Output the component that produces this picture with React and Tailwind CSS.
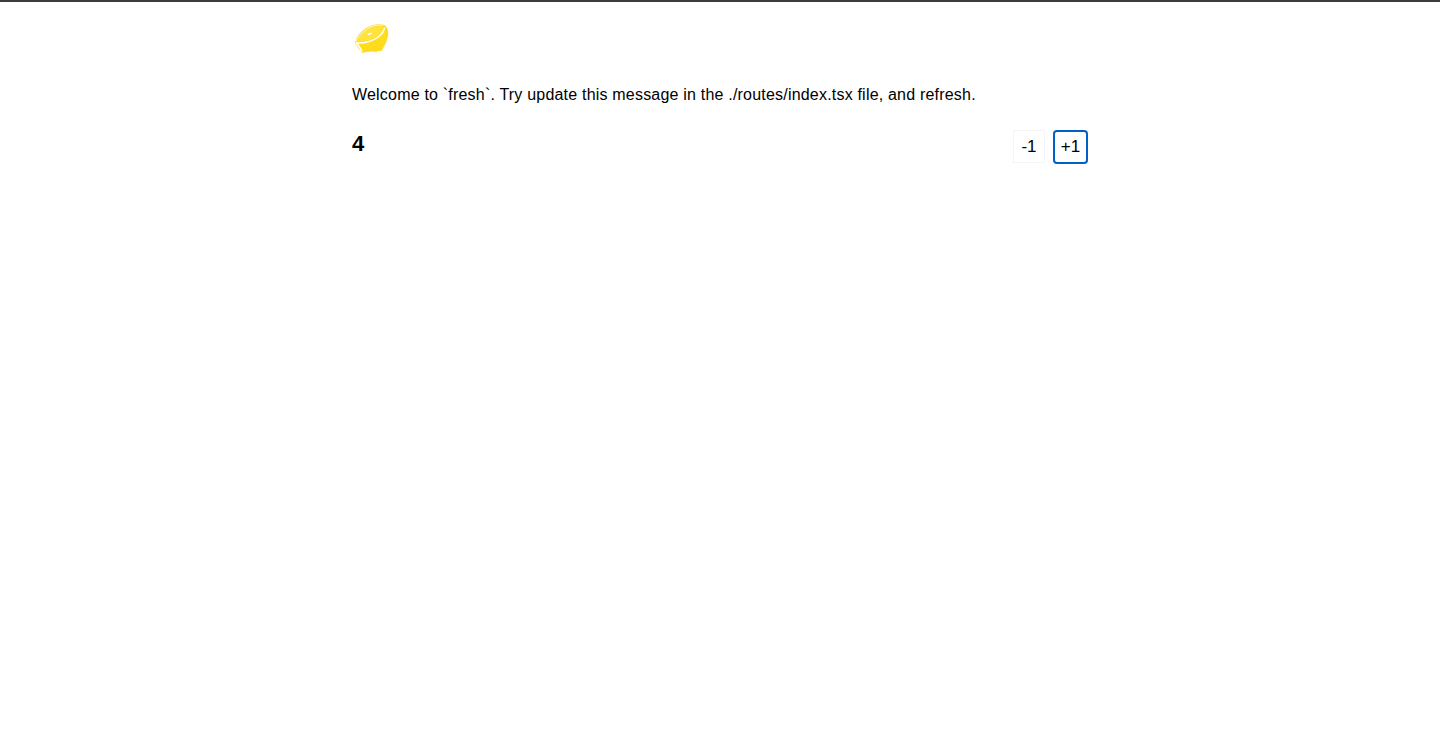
export default function App() {
  return (
    <div className="min-h-[730px] bg-white text-black font-['Liberation_Sans',Arial,sans-serif]">
      <div className="h-0.5 bg-[#3c3c3c]" />
      <div className="mx-auto w-[736px] pt-[21px]">
        <svg width="40" height="34" viewBox="0 0 40 34" className="block">
          <path d="M3 20C4 13 11 6 18 3C23 1 29 1 32 2C35 3 37 8 36 13C35 19 32 24 29.5 28L26 28L24 29L20 28.5L14 29L10 30C8 27 5 24 3 20Z" fill="#FFDB1E" />
          <path d="M5 18.5C7 13 12 8 18 5C23 3 28 2.5 30.5 3.2C32 6 30 10 26 13C20 17 12 19 5 18.5Z" fill="#FFE23C" />
          <path d="M4.5 20C13 20.5 22 17.5 27 13.5C30 11 32 8 32.6 4.5" fill="none" stroke="#ffffff" strokeWidth="1.5" />
          <path d="M4.5 20C6 22.5 8.5 24.5 9.5 28" fill="none" stroke="#ffffff" strokeWidth="1.8" strokeLinecap="round" />
          <path d="M4 18.5C6 13 12 7.5 18 4.2C23 2 28 1.8 31 2.4" fill="none" stroke="#ffffff" strokeWidth="0.8" />
          <path d="M15 11.8C16 10.2 18.5 9.4 20.2 9.9C19.6 11.5 17 12.4 15 11.8Z" fill="#ffffff" />
        </svg>
        <p className="mt-[26px] text-base leading-6 tracking-[0.2px]">
          Welcome to `fresh`. Try update this message in the ./routes/index.tsx file, and refresh.
        </p>
        <div className="mt-[23px] flex justify-between">
          <p className="text-[22px] leading-[28px] font-bold">4</p>
          <div className="flex items-start gap-2">
            <button className="h-[33px] w-[32px] border border-gray-100 bg-white text-[17px]">-1</button>
            <button className="h-[34px] w-[35px] rounded border-2 border-[#0060c7] bg-white text-[17px]">+1</button>
          </div>
        </div>
      </div>
    </div>
  );
}
